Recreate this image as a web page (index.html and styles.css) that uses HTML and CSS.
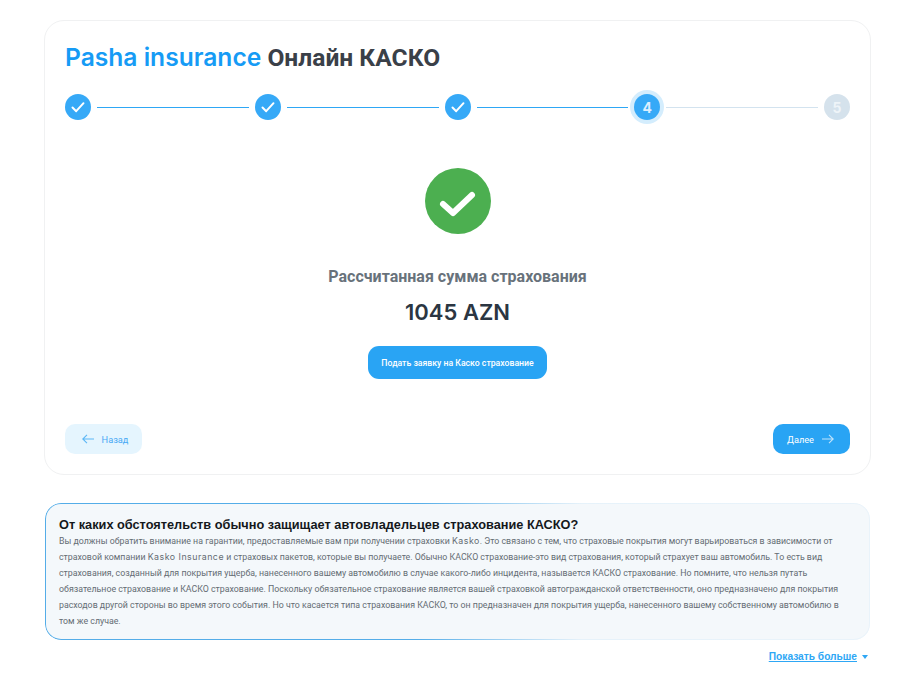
FILE: index.html
```html
<!DOCTYPE html>
<html lang="ru">
<head>
<meta charset="utf-8">
<title>Онлайн КАСКО</title>
<link rel="stylesheet" href="styles.css">
</head>
<body>
<main class="page">
  <section class="card">
    <h1 class="title"><span class="brand">Pasha insurance</span> Онлайн КАСКО</h1>
    <div class="steps">
      <span class="step done"><svg class="tick" viewBox="0 0 16 16"><path d="M2.500 8.500 6.200 12.200 13.500 4.200"/></svg></span>
      <span class="line done"></span>
      <span class="step done"><svg class="tick" viewBox="0 0 16 16"><path d="M2.500 8.500 6.200 12.200 13.500 4.200"/></svg></span>
      <span class="line done"></span>
      <span class="step done"><svg class="tick" viewBox="0 0 16 16"><path d="M2.500 8.500 6.200 12.200 13.500 4.200"/></svg></span>
      <span class="line done"></span>
      <span class="step active">4</span>
      <span class="line"></span>
      <span class="step todo">5</span>
    </div>
    <div class="result">
      <svg class="ok" viewBox="0 0 66 66"><circle cx="33" cy="33" r="33"/><path d="M18 36 28 45 47 27"/></svg>
      <p class="label">Рассчитанная сумма страхования</p>
      <p class="amount">1045 AZN</p>
      <button class="apply" type="button">Подать заявку на Каско страхование</button>
    </div>
    <div class="nav">
      <button class="btn back" type="button"><svg class="arrow" viewBox="0 0 12 10"><path d="M12 5H.8M5 .8.800 5 5 9.200"/></svg>Назад</button>
      <button class="btn next" type="button">Далее<svg class="arrow" viewBox="0 0 12 10"><path d="M0 5h11.200M7 .8 11.200 5 7 9.200"/></svg></button>
    </div>
  </section>
  <section class="info">
    <h2 class="info-title">От каких обстоятельств обычно защищает автовладельцев страхование КАСКО?</h2>
    <p class="info-text">Вы должны обратить внимание на гарантии, предоставляемые вам при получении страховки <span class="latin">Kasko</span>. Это связано с тем, что страховые покрытия могут варьироваться в зависимости от страховой компании <span class="latin">Kasko Insurance</span> и страховых пакетов, которые вы получаете. Обычно КАСКО страхование-это вид страхования, который страхует ваш автомобиль. То есть вид страхования, созданный для покрытия ущерба, нанесенного вашему автомобилю в случае какого-либо инцидента, называется КАСКО страхование. Но помните, что нельзя путать обязательное страхование и КАСКО страхование. Поскольку обязательное страхование является вашей страховкой автогражданской ответственности, оно предназначено для покрытия расходов другой стороны во время этого события. Но что касается типа страхования КАСКО, то он предназначен для покрытия ущерба, нанесенного вашему собственному автомобилю в том же случае.</p>
  </section>
  <div class="more-row"><a class="more" href="#">Показать больше</a><span class="caret"></span></div>
</main>
</body>
</html>
```

FILE: styles.css
```css
* { box-sizing: border-box; }
html, body { margin: 0; padding: 0; background: #fff; }
body { font-family: Roboto, "Liberation Sans", sans-serif; overflow: hidden; height: 681px; }
.page { width: 827px; margin-left: 44px; padding-top: 20px; }
.card {
  height: 455px; border: 1px solid #f0f1f2; border-radius: 20px;
  padding: 19px 20px 20px; display: flex; flex-direction: column;
}
.title { margin: 0; font-size: 24.600px; line-height: 34px; font-weight: 700; color: #3a4048; }
.brand { font-family: Inter, Roboto, sans-serif; font-weight: 600; font-size: 24.600px; color: #169bf5; }
.steps { display: flex; align-items: center; margin-top: 19px; height: 26px; }
.step {
  flex: none; width: 26px; height: 26px; border-radius: 50%; display: flex; align-items: center; justify-content: center;
  font-family: Inter, sans-serif; font-size: 14px; font-weight: 700; color: #dcefff;
}
.step.done, .step.active { background: #36a9f7; }
.step.active { box-shadow: 0 0 0 4px #d4edfd; }
.step.todo { background: #d5e2ec; color: #eef4f8; }
.tick { width: 16px; height: 16px; fill: none; stroke: #fff; stroke-width: 2; stroke-linecap: round; stroke-linejoin: round; }
.line { flex: 1; height: 1px; margin: 0 6px; background: #d3e3ef; }
.line.done { background: #2ea7f5; }
.result { display: flex; flex-direction: column; align-items: center; margin-top: 48px; }
.ok { width: 66px; height: 66px; }
.ok circle { fill: #4caf50; }
.ok path { fill: none; stroke: #fff; stroke-width: 6; stroke-linecap: round; stroke-linejoin: round; }
.label { margin: 33px 0 0; font-size: 16px; line-height: 20px; font-weight: 700; color: #68727b; }
.amount { margin: 8px 0 0; font-family: Inter, sans-serif; font-size: 22px; line-height: 34px; font-weight: 600; color: #2b3642; }
.apply {
  margin-top: 17px; width: 179px; height: 33px; border: 0; border-radius: 11px; background: #29a4f4; color: #fff;
  font-family: Roboto, sans-serif; font-size: 8.700px; font-weight: 500; padding: 0;
}
.nav { margin-top: auto; display: flex; justify-content: space-between; }
.btn {
  width: 77px; height: 30px; border: 0; border-radius: 10px; display: flex; align-items: center; justify-content: center; gap: 8px;
  font-family: Roboto, sans-serif; font-size: 9.200px; font-weight: 400; padding: 0;
}
.back { background: #e5f5fe; color: #47a9f5; padding-left: 3px; }
.next { background: #29a4f4; color: #fff; padding-right: 2px; }
.arrow { width: 12px; height: 10px; fill: none; stroke-width: 1.100; }
.back .arrow { stroke: #5cb7f6; }
.next .arrow { stroke: #bfe3fb; }
.info {
  position: relative; margin: 28px 1px 0 1px; height: 137px; padding: 14px 19px 0 14px; border-radius: 16px; background: #f4f8fb;
}
.info::before {
  content: ""; position: absolute; inset: 0; border-radius: 16px; padding: 1px; pointer-events: none;
  background: linear-gradient(90deg, #54ade8 0%, #54ade8 45%, #e6f2fa 65%, #e9f3fa 100%);
  -webkit-mask: linear-gradient(#000 0 0) content-box, linear-gradient(#000 0 0);
  -webkit-mask-composite: xor; mask-composite: exclude;
}
.info-title { margin: 0; font-family: "Liberation Sans", sans-serif; font-size: 12.750px; line-height: 16px; font-weight: 700; color: #14181c; }
.info-text { margin: 0; font-size: 8.800px; line-height: 16px; font-weight: 400; color: #646c73; }
.latin { font-family: Inter, sans-serif; font-size: 8.800px; letter-spacing: .5px; }
.more-row { display: flex; justify-content: flex-end; align-items: center; gap: 5px; margin-top: 11px; padding-right: 3px; }
.more { font-family: "Liberation Sans", sans-serif; font-size: 10.200px; font-weight: 700; line-height: 12px; color: #2ea7f5; }
.caret { width: 0; height: 0; border: 3.500px solid transparent; border-top: 4px solid #2ea7f5; border-bottom: 0; }
```
